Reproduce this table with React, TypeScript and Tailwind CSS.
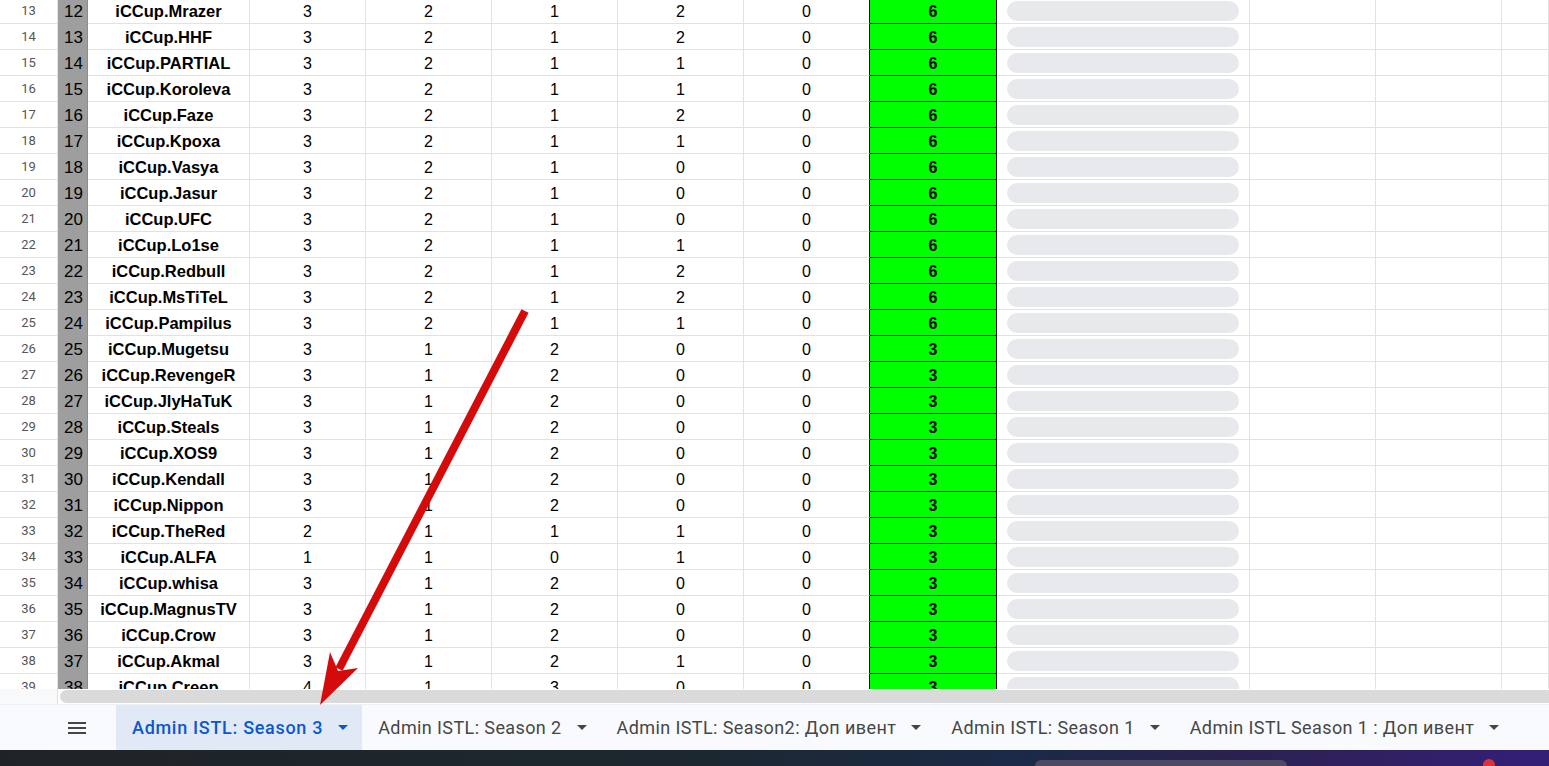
type Row = [number, string, number, number, number, number, number, number];

const rows: Row[] = [
  [12, 'iCCup.Mrazer', 3, 2, 1, 2, 0, 6],
  [13, 'iCCup.HHF', 3, 2, 1, 2, 0, 6],
  [14, 'iCCup.PARTIAL', 3, 2, 1, 1, 0, 6],
  [15, 'iCCup.Koroleva', 3, 2, 1, 1, 0, 6],
  [16, 'iCCup.Faze', 3, 2, 1, 2, 0, 6],
  [17, 'iCCup.Kpoxa', 3, 2, 1, 1, 0, 6],
  [18, 'iCCup.Vasya', 3, 2, 1, 0, 0, 6],
  [19, 'iCCup.Jasur', 3, 2, 1, 0, 0, 6],
  [20, 'iCCup.UFC', 3, 2, 1, 0, 0, 6],
  [21, 'iCCup.Lo1se', 3, 2, 1, 1, 0, 6],
  [22, 'iCCup.Redbull', 3, 2, 1, 2, 0, 6],
  [23, 'iCCup.MsTiTeL', 3, 2, 1, 2, 0, 6],
  [24, 'iCCup.Pampilus', 3, 2, 1, 1, 0, 6],
  [25, 'iCCup.Mugetsu', 3, 1, 2, 0, 0, 3],
  [26, 'iCCup.RevengeR', 3, 1, 2, 0, 0, 3],
  [27, 'iCCup.JlyHaTuK', 3, 1, 2, 0, 0, 3],
  [28, 'iCCup.Steals', 3, 1, 2, 0, 0, 3],
  [29, 'iCCup.XOS9', 3, 1, 2, 0, 0, 3],
  [30, 'iCCup.Kendall', 3, 1, 2, 0, 0, 3],
  [31, 'iCCup.Nippon', 3, 1, 2, 0, 0, 3],
  [32, 'iCCup.TheRed', 2, 1, 1, 1, 0, 3],
  [33, 'iCCup.ALFA', 1, 1, 0, 1, 0, 3],
  [34, 'iCCup.whisa', 3, 1, 2, 0, 0, 3],
  [35, 'iCCup.MagnusTV', 3, 1, 2, 0, 0, 3],
  [36, 'iCCup.Crow', 3, 1, 2, 0, 0, 3],
  [37, 'iCCup.Akmal', 3, 1, 2, 1, 0, 3],
  [38, 'iCCup.Creep', 4, 1, 3, 0, 0, 3],
];

const tabs = [
  'Admin ISTL: Season 3',
  'Admin ISTL: Season 2',
  'Admin ISTL: Season2: Доп ивент',
  'Admin ISTL: Season 1',
  'Admin ISTL Season 1 : Доп ивент',
];

// cell text sits a pixel low, like the sheet's bottom alignment
const cell = 'h-full shrink-0 flex items-center justify-center pt-[2px] border-r border-b border-[#e2e2e2]';

function Caret({ active }: { active: boolean }) {
  return (
    <svg width="10" height="5" viewBox="0 0 10 5" className="shrink-0">
      <path d="M0 0h10L5 5z" fill={active ? '#0b57d0' : '#444746'} />
    </svg>
  );
}

function SheetRow({ r }: { r: Row }) {
  const [n, name, c, d, e, f, g, h] = r;
  return (
    <div className="flex h-[26px] font-['Liberation_Sans',Arial,sans-serif] text-[16px] text-black">
      <div className="h-full w-[58px] shrink-0 flex items-center justify-center border-r border-b border-[#e2e2e2] text-[13px] text-[#555] font-['Roboto',sans-serif]">
        {n + 1}
      </div>
      <div className="h-full w-[30px] shrink-0 flex items-center justify-end pr-[4px] pt-[2px] bg-[#9e9e9e] border-r border-b border-r-[#8c8c8c] border-b-[#9e9e9e] text-[17px]">
        {n}
      </div>
      <div className={`${cell} w-[162px] font-bold text-[16.5px]`}>{name}</div>
      <div className={`${cell} w-[116px]`}>{c}</div>
      <div className={`${cell} w-[126px]`}>{d}</div>
      <div className={`${cell} w-[126px]`}>{e}</div>
      <div className={`${cell} w-[126px]`}>{f}</div>
      <div className="h-full w-[126px] shrink-0 flex items-center justify-center pt-[2px] border-r border-b border-r-black border-b-[#e2e2e2]">
        {g}
      </div>
      <div className="h-full w-[127px] shrink-0 flex items-center justify-center pt-[2px] bg-[#00ff00] border-r border-b border-black font-bold">
        {h}
      </div>
      <div className="h-full w-[253px] shrink-0 flex items-center px-[10px] border-r border-b border-[#e2e2e2]">
        <div className="h-[20px] w-full rounded-full bg-[#e8e9ec]" />
      </div>
      <div className={`${cell} w-[126px]`} />
      <div className={`${cell} w-[126px]`} />
      <div className={`${cell} flex-1`} />
    </div>
  );
}

export default function App() {
  return (
    <div className="relative w-[1549px] h-[766px] overflow-hidden bg-white flex flex-col">
      {/* grid */}
      <div className="h-[689px] shrink-0 overflow-hidden">
        <div className="-mt-[2px]">
          {rows.map(r => (
            <SheetRow key={r[0]} r={r} />
          ))}
        </div>
      </div>

      {/* horizontal scrollbar */}
      <div className="h-[15px] shrink-0 flex">
        <div className="w-[58px] h-full bg-[#f8f9fa] border-r border-[#e0e0e0]" />
        <div className="flex-1 h-full pl-[2px] py-[1px] bg-white">
          <div className="h-full w-full rounded-l-full bg-[#dadada]" />
        </div>
      </div>
      <div className="h-px shrink-0 bg-[#eef0f3]" />

      {/* sheet tabs */}
      <div className="h-[45px] shrink-0 flex bg-[#f9fafd] font-['Roboto',sans-serif] text-[18px]">
        <div className="w-[116px] h-full flex items-center pl-[68px]">
          <div className="flex flex-col gap-[3px] w-[18px]">
            <div className="h-[2px] bg-[#444746]" />
            <div className="h-[2px] bg-[#444746]" />
            <div className="h-[2px] bg-[#444746]" />
          </div>
        </div>
        {tabs.map((t, i) => (
          <div
            key={t}
            className={`h-full flex items-center pl-[16px] pr-[14px] gap-[15px] whitespace-nowrap ${
              i === 0
                ? 'bg-[#e1e9f7] text-[#0b57d0] font-medium tracking-[0.7px]'
                : 'text-[#444746] tracking-[0.4px]'
            }`}
          >
            <span>{t}</span>
            <Caret active={i === 0} />
          </div>
        ))}
      </div>

      {/* taskbar strip */}
      <div className="h-[16px] shrink-0 flex items-end bg-[linear-gradient(90deg,#1f2326_0%,#1c2830_45%,#1b2a48_66%,#2b2150_80%,#341f78_100%)]">
        <div className="w-[1035px] shrink-0" />
        <div className="w-[252px] h-[6px] shrink-0 rounded-t-[8px] bg-[#4b4a62]" />
        <div className="w-[196px] shrink-0" />
        <div className="w-[12px] h-[7px] shrink-0 rounded-t-full bg-[#e0303a]" />
      </div>

      {/* annotation arrow */}
      <svg className="absolute inset-0 pointer-events-none" width="1549" height="766" viewBox="0 0 1549 766">
        <line x1="525" y1="311" x2="339" y2="669" stroke="#d50b0b" strokeWidth="8" />
        <polygon points="320,705 358,668 338,671 330,652" fill="#d50b0b" />
      </svg>
    </div>
  );
}
